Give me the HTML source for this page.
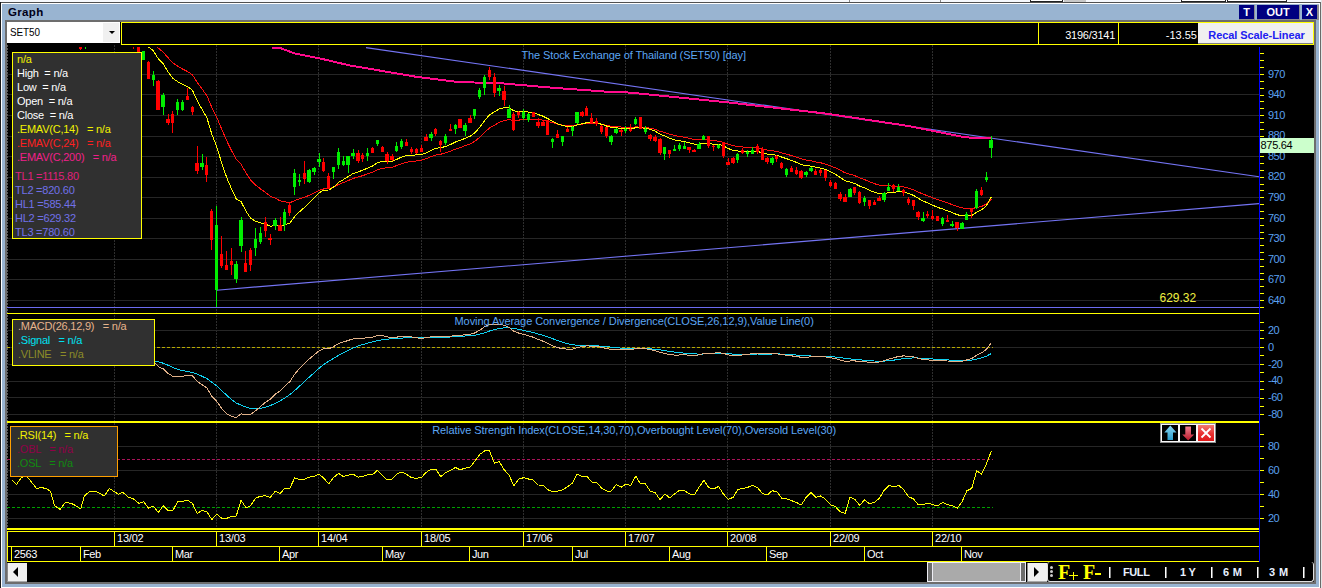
<!DOCTYPE html>
<html><head><meta charset="utf-8"><style>
*{margin:0;padding:0;box-sizing:border-box}
html,body{width:1322px;height:588px;overflow:hidden}
body{position:relative;background:#99b4d1;font-family:"Liberation Sans",sans-serif;font-size:11px}
.a{position:absolute}
.lg{position:absolute;background:#303030;border:1px solid #ffff00;line-height:14px;letter-spacing:-0.23px}
.lg div{height:14px;white-space:pre}
.tb{position:absolute;top:5px;height:15px;background:#000080;color:#fff;font-weight:bold;font-size:11px;text-align:center;line-height:14px;border-right:1px solid #8c8c8c;border-bottom:1px solid #8c8c8c}
.sep{position:absolute;top:567px;width:2px;height:11px;background:#fff;border-right:1px solid #888}
.tt{position:absolute;top:565px;color:#e8f0ff;font-weight:bold;font-size:11px;line-height:14px;letter-spacing:2.5px}
</style></head><body>
<div class="a" style="left:0;top:0;width:1322px;height:2px;background:#f6f8fc"></div>
<div class="a" style="left:849px;top:0;width:1px;height:2px;background:#888"></div>
<div class="a" style="left:940px;top:0;width:1px;height:2px;background:#888"></div>
<div class="a" style="left:1030px;top:0;width:33px;height:2px;border:1px solid #222;border-top:none;background:#fff"></div>
<div class="a" style="left:1064px;top:0;width:22px;height:2px;background:#c8c8c8"></div>
<div class="a" style="left:1181px;top:0;width:45px;height:2px;border:1px solid #222;border-top:none;background:#fff"></div>
<div class="a" style="left:1227px;top:0;width:60px;height:2px;border:1px solid #222;border-top:none;background:#fff"></div>
<div class="a" style="left:0;top:2px;width:1322px;height:1px;background:#505050"></div>
<div class="a" style="left:0;top:3px;width:1322px;height:1px;background:#fff"></div>
<div class="a" style="left:0;top:2px;width:1px;height:586px;background:#1a1a1a"></div><div class="a" style="left:1px;top:587px;width:1320px;height:1px;background:#fff"></div>
<div class="a" style="left:1px;top:3px;width:1px;height:585px;background:#fff"></div>
<div class="a" style="left:1319px;top:3px;width:1px;height:585px;background:#fff"></div>
<div class="a" style="left:1320px;top:2px;width:1px;height:586px;background:#6a6a6a"></div><div class="a" style="left:1321px;top:0;width:1px;height:588px;background:#e4e4e4"></div>
<div class="a" style="left:8px;top:6px;font-weight:bold;font-size:11.5px;color:#000018;line-height:13px;letter-spacing:0.35px">Graph</div>
<div class="tb" style="left:1239px;width:16px">T</div>
<div class="tb" style="left:1257px;width:43px">OUT</div>
<div class="tb" style="left:1302px;width:17px;border-right-width:2px">X</div>
<div class="a" style="left:5px;top:20px;width:1311px;height:564px;background:#6d6d6d"></div>
<svg width="1322" height="588" style="position:absolute;left:0;top:0">
<rect x="7" y="22" width="1307" height="560" fill="#000" />
<g shape-rendering="crispEdges">
<rect x="7" y="74" width="1252" height="1" fill="#262626" />
<rect x="7" y="94" width="1252" height="1" fill="#262626" />
<rect x="7" y="115" width="1252" height="1" fill="#262626" />
<rect x="7" y="136" width="1252" height="1" fill="#262626" />
<rect x="7" y="156" width="1252" height="1" fill="#262626" />
<rect x="7" y="177" width="1252" height="1" fill="#262626" />
<rect x="7" y="197" width="1252" height="1" fill="#262626" />
<rect x="7" y="218" width="1252" height="1" fill="#262626" />
<rect x="7" y="238" width="1252" height="1" fill="#262626" />
<rect x="7" y="259" width="1252" height="1" fill="#262626" />
<rect x="7" y="279" width="1252" height="1" fill="#262626" />
<rect x="7" y="300" width="1252" height="1" fill="#262626" />
<line x1="114.5" y1="45" x2="114.5" y2="528" stroke="#2e2e2e" stroke-width="1" stroke-dasharray="2,1"/>
<line x1="216.5" y1="45" x2="216.5" y2="528" stroke="#2e2e2e" stroke-width="1" stroke-dasharray="2,1"/>
<line x1="318.5" y1="45" x2="318.5" y2="528" stroke="#2e2e2e" stroke-width="1" stroke-dasharray="2,1"/>
<line x1="421.5" y1="45" x2="421.5" y2="528" stroke="#2e2e2e" stroke-width="1" stroke-dasharray="2,1"/>
<line x1="523.5" y1="45" x2="523.5" y2="528" stroke="#2e2e2e" stroke-width="1" stroke-dasharray="2,1"/>
<line x1="625.5" y1="45" x2="625.5" y2="528" stroke="#2e2e2e" stroke-width="1" stroke-dasharray="2,1"/>
<line x1="727.5" y1="45" x2="727.5" y2="528" stroke="#2e2e2e" stroke-width="1" stroke-dasharray="2,1"/>
<line x1="830.5" y1="45" x2="830.5" y2="528" stroke="#2e2e2e" stroke-width="1" stroke-dasharray="2,1"/>
<line x1="932.5" y1="45" x2="932.5" y2="528" stroke="#2e2e2e" stroke-width="1" stroke-dasharray="2,1"/>
<line x1="7.5" y1="45" x2="7.5" y2="528" stroke="#5a5a5a" stroke-width="1" stroke-dasharray="2,1"/>
<rect x="7" y="330" width="1252" height="1" fill="#262626" />
<rect x="7" y="347" width="1252" height="1" fill="#262626" />
<rect x="7" y="364" width="1252" height="1" fill="#262626" />
<rect x="7" y="381" width="1252" height="1" fill="#262626" />
<rect x="7" y="397" width="1252" height="1" fill="#262626" />
<rect x="7" y="414" width="1252" height="1" fill="#262626" />
<rect x="7" y="446" width="1252" height="1" fill="#262626" />
<rect x="7" y="470" width="1252" height="1" fill="#262626" />
<rect x="7" y="494" width="1252" height="1" fill="#262626" />
<rect x="7" y="518" width="1252" height="1" fill="#262626" />
</g>
<line x1="366" y1="47.6" x2="1259" y2="176.8" stroke="#7474f4" stroke-width="1.1"/>
<line x1="216.5" y1="290.2" x2="1259" y2="203.6" stroke="#7474f4" stroke-width="1.1"/>
<g shape-rendering="crispEdges">
<rect x="7" y="307" width="1252" height="1.4" fill="#6c6cf0" />
</g>
<text x="1159.5" y="302" font-size="12" fill="#f0f040" font-family="Liberation Sans">629.32</text>
<clipPath id="pc"><rect x="7" y="47" width="1252" height="265"/></clipPath>
<g clip-path="url(#pc)">
<polyline points="272.0,47.6 280.7,48.2 295.2,53.6 318.8,58.2 349.7,65.4 390.0,72.3 416.2,76.8 459.7,82.2 497.9,83.0 552.3,87.7 606.8,91.7 630.0,92.6 728.0,102.4 826.0,113.6 909.9,126.2 965.8,137.4 991.0,138.2" fill="none" stroke="#ff0a8c" stroke-width="2.0" stroke-linejoin="round" shape-rendering="crispEdges"/>
<polyline points="138.8,35.1 143.7,36.4 148.5,39.9 153.4,42.7 158.3,48.2 163.2,52.0 168.0,57.7 172.9,62.9 177.8,66.1 182.6,69.0 187.5,71.5 192.4,74.8 197.3,82.5 202.1,89.0 207.0,96.0 211.9,107.5 216.7,117.0 221.6,129.0 226.5,140.3 231.4,150.3 236.2,159.4 241.1,164.3 246.0,173.0 250.8,180.4 255.7,185.1 260.6,189.0 265.5,192.4 270.3,196.3 275.2,198.2 280.1,200.9 284.9,201.8 289.8,202.8 294.7,200.5 299.6,198.9 304.4,197.3 309.3,195.2 314.2,193.1 319.0,190.4 323.9,188.9 328.8,188.9 333.7,187.2 338.5,184.5 343.4,182.6 348.3,180.6 353.1,178.4 358.0,177.0 362.9,175.6 367.8,173.8 372.6,172.2 377.5,169.7 382.4,168.3 387.2,167.8 392.1,167.2 397.0,165.5 401.9,163.6 406.7,162.3 411.6,161.5 416.5,160.9 421.3,160.2 426.2,158.7 431.1,156.7 436.0,154.9 440.8,154.2 445.7,152.8 450.6,151.1 455.4,149.1 460.3,147.5 465.2,145.7 470.1,144.0 474.9,141.2 479.8,137.2 484.7,132.4 489.5,128.0 494.4,125.2 499.3,122.3 504.2,120.6 509.0,119.7 513.9,120.5 518.8,120.1 523.6,119.5 528.5,119.1 533.4,119.0 538.3,119.6 543.1,120.1 548.0,121.4 552.9,122.8 557.7,124.1 562.6,125.1 567.5,125.7 572.4,125.8 577.2,124.8 582.1,124.1 587.0,123.5 591.8,123.5 596.7,123.6 601.6,124.3 606.5,125.3 611.3,126.2 616.2,126.5 621.1,127.0 625.9,127.2 630.8,127.6 635.7,126.9 640.6,127.1 645.4,127.3 650.3,128.2 655.2,129.3 660.0,131.3 664.9,132.6 669.8,134.3 674.7,135.5 679.5,136.4 684.4,137.2 689.3,138.3 694.1,139.5 699.0,139.9 703.9,139.6 708.8,140.2 713.6,140.8 718.5,141.1 723.4,142.4 728.2,144.2 733.1,145.7 738.0,146.4 742.9,147.0 747.7,147.4 752.6,147.6 757.5,148.0 762.3,149.0 767.2,150.1 772.1,150.8 777.0,151.5 781.8,152.9 786.7,154.2 791.6,155.6 796.4,157.2 801.3,158.9 806.2,160.0 811.1,160.7 815.9,161.9 820.8,162.8 825.7,164.1 830.5,165.9 835.4,167.8 840.3,170.3 845.2,172.9 850.0,174.2 854.9,175.7 859.8,178.0 864.6,179.6 869.5,181.8 874.4,183.7 879.3,185.1 884.1,185.7 889.0,185.9 893.9,186.2 898.7,186.3 903.6,186.9 908.5,188.2 913.4,189.7 918.2,192.0 923.1,194.1 928.0,195.9 932.8,197.8 937.7,199.7 942.6,201.2 947.5,202.9 952.3,204.7 957.2,206.6 962.1,207.9 966.9,208.5 971.8,208.8 976.7,207.4 981.6,206.4 986.4,204.1 991.3,199.0" fill="none" stroke="#ff1010" stroke-width="1.0" stroke-linejoin="round" shape-rendering="crispEdges"/>
<polyline points="138.8,40.5 143.7,42.0 148.5,47.0 153.4,50.8 158.3,58.8 163.2,63.7 168.0,71.7 172.9,78.5 177.8,81.7 182.6,84.5 187.5,86.6 192.4,90.1 197.3,100.9 202.1,109.3 207.0,118.1 211.9,134.5 216.7,146.6 221.6,162.6 226.5,177.0 231.4,188.7 236.2,198.8 241.1,201.7 246.0,211.2 250.8,218.5 255.7,221.3 260.6,223.0 265.5,224.1 270.3,226.3 275.2,225.5 280.1,226.4 284.9,224.5 289.8,223.1 294.7,216.5 299.6,211.7 304.4,207.4 309.3,202.5 314.2,198.0 319.0,192.9 323.9,190.1 328.8,190.0 333.7,187.0 338.5,182.4 343.4,179.6 348.3,176.6 353.1,173.5 358.0,171.9 362.9,170.2 367.8,168.0 372.6,166.0 377.5,162.7 382.4,161.3 387.2,161.4 392.1,161.2 397.0,159.3 401.9,156.9 406.7,155.5 411.6,155.2 416.5,154.9 421.3,154.6 426.2,152.8 431.1,150.3 436.0,148.2 440.8,147.8 445.7,146.4 450.6,144.5 455.4,142.0 460.3,140.3 465.2,138.3 470.1,136.3 474.9,132.8 479.8,127.1 484.7,120.5 489.5,114.8 494.4,111.9 499.3,108.8 504.2,107.7 509.0,107.9 513.9,110.9 518.8,111.5 523.6,111.6 528.5,112.1 533.4,112.8 538.3,114.6 543.1,116.2 548.0,118.8 552.9,121.5 557.7,123.8 562.6,125.5 567.5,126.5 572.4,126.6 577.2,124.8 582.1,123.7 587.0,122.7 591.8,122.8 596.7,123.0 601.6,124.3 606.5,126.0 611.3,127.4 616.2,127.7 621.1,128.4 625.9,128.6 630.8,129.0 635.7,127.7 640.6,127.9 645.4,128.1 650.3,129.5 655.2,131.1 660.0,134.2 664.9,136.0 669.8,138.4 674.7,139.9 679.5,140.7 684.4,141.5 689.3,142.8 694.1,144.1 699.0,144.2 703.9,143.2 708.8,143.6 713.6,144.2 718.5,144.3 723.4,145.9 728.2,148.5 733.1,150.5 738.0,151.0 742.9,151.4 747.7,151.5 752.6,151.3 757.5,151.5 762.3,152.7 767.2,154.0 772.1,154.6 777.0,155.3 781.8,157.1 786.7,158.7 791.6,160.5 796.4,162.4 801.3,164.6 806.2,165.7 811.1,166.1 815.9,167.3 820.8,168.2 825.7,169.6 830.5,171.8 835.4,174.2 840.3,177.5 845.2,180.9 850.0,182.0 854.9,183.5 859.8,186.2 864.6,187.9 869.5,190.4 874.4,192.3 879.3,193.6 884.1,193.5 889.0,192.7 893.9,192.3 898.7,191.7 903.6,192.0 908.5,193.5 913.4,195.3 918.2,198.3 923.1,201.0 928.0,203.1 932.8,205.3 937.7,207.4 942.6,209.0 947.5,210.8 952.3,212.6 957.2,214.7 962.1,215.9 966.9,215.8 971.8,215.4 976.7,212.2 981.6,209.9 986.4,205.6 991.3,196.9" fill="none" stroke="#ffff00" stroke-width="1.0" stroke-linejoin="round" shape-rendering="crispEdges"/>
<g shape-rendering="crispEdges">
<rect x="80" y="47" width="1" height="3" fill="#ff0000" />
<rect x="79" y="47" width="3" height="2" fill="#ff0000" />
<rect x="85" y="47" width="1" height="1" fill="#00ee00" />
<rect x="85" y="47" width="1" height="2" fill="#00ee00" />
<rect x="133" y="47" width="1" height="1" fill="#ff0000" />
<rect x="133" y="47" width="1" height="2" fill="#ff0000" />
<rect x="138" y="47" width="1" height="5" fill="#ff0000" />
<rect x="137" y="47" width="3" height="5" fill="#ff0000" />
<rect x="143" y="51" width="1" height="9" fill="#00ee00" />
<rect x="142" y="51" width="3" height="9" fill="#00ee00" />
<rect x="148" y="61" width="1" height="18" fill="#ff0000" />
<rect x="147" y="62" width="3" height="17" fill="#ff0000" />
<rect x="153" y="71" width="1" height="15" fill="#00ee00" />
<rect x="152" y="75" width="3" height="5" fill="#00ee00" />
<rect x="158" y="80" width="1" height="30" fill="#ff0000" />
<rect x="156" y="81" width="4" height="29" fill="#ff0000" />
<rect x="163" y="93" width="1" height="22" fill="#00ee00" />
<rect x="161" y="95" width="4" height="12" fill="#00ee00" />
<rect x="168" y="114" width="1" height="11" fill="#ff0000" />
<rect x="166" y="119" width="4" height="4" fill="#ff0000" />
<rect x="172" y="111" width="1" height="22" fill="#ff0000" />
<rect x="171" y="114" width="3" height="9" fill="#ff0000" />
<rect x="177" y="99" width="1" height="16" fill="#00ee00" />
<rect x="176" y="102" width="3" height="8" fill="#00ee00" />
<rect x="182" y="100" width="1" height="11" fill="#00ee00" />
<rect x="181" y="102" width="3" height="8" fill="#00ee00" />
<rect x="187" y="88" width="1" height="12" fill="#ff0000" />
<rect x="186" y="96" width="3" height="4" fill="#ff0000" />
<rect x="192" y="106" width="1" height="9" fill="#ff0000" />
<rect x="191" y="107" width="3" height="5" fill="#ff0000" />
<rect x="197" y="146" width="1" height="28" fill="#ff0000" />
<rect x="195" y="163" width="4" height="8" fill="#ff0000" />
<rect x="202" y="154" width="1" height="16" fill="#00ee00" />
<rect x="200" y="163" width="4" height="4" fill="#00ee00" />
<rect x="206" y="157" width="1" height="25" fill="#ff0000" />
<rect x="205" y="165" width="3" height="10" fill="#ff0000" />
<rect x="211" y="209" width="1" height="41" fill="#ff0000" />
<rect x="210" y="211" width="3" height="29" fill="#ff0000" />
<rect x="216" y="206" width="1" height="101" fill="#00ee00" />
<rect x="215" y="225" width="3" height="65" fill="#00ee00" />
<rect x="221" y="236" width="1" height="32" fill="#ff0000" />
<rect x="220" y="254" width="3" height="12" fill="#ff0000" />
<rect x="226" y="251" width="1" height="19" fill="#ff0000" />
<rect x="225" y="265" width="3" height="5" fill="#ff0000" />
<rect x="231" y="248" width="1" height="27" fill="#ff0000" />
<rect x="230" y="261" width="3" height="4" fill="#ff0000" />
<rect x="236" y="261" width="1" height="22" fill="#00ee00" />
<rect x="234" y="264" width="4" height="15" fill="#00ee00" />
<rect x="241" y="217" width="1" height="35" fill="#00ee00" />
<rect x="239" y="220" width="4" height="26" fill="#00ee00" />
<rect x="245" y="251" width="1" height="21" fill="#ff0000" />
<rect x="244" y="263" width="3" height="9" fill="#ff0000" />
<rect x="250" y="248" width="1" height="23" fill="#ff0000" />
<rect x="249" y="250" width="3" height="15" fill="#ff0000" />
<rect x="255" y="228" width="1" height="28" fill="#00ee00" />
<rect x="254" y="239" width="3" height="9" fill="#00ee00" />
<rect x="260" y="227" width="1" height="17" fill="#00ee00" />
<rect x="259" y="233" width="3" height="9" fill="#00ee00" />
<rect x="265" y="217" width="1" height="20" fill="#ff0000" />
<rect x="264" y="222" width="3" height="9" fill="#ff0000" />
<rect x="270" y="234" width="1" height="11" fill="#ff0000" />
<rect x="268" y="238" width="4" height="2" fill="#ff0000" />
<rect x="275" y="218" width="1" height="12" fill="#00ee00" />
<rect x="273" y="220" width="4" height="6" fill="#00ee00" />
<rect x="280" y="217" width="1" height="14" fill="#ff0000" />
<rect x="278" y="225" width="4" height="6" fill="#ff0000" />
<rect x="284" y="209" width="1" height="22" fill="#00ee00" />
<rect x="283" y="212" width="3" height="13" fill="#00ee00" />
<rect x="289" y="203" width="1" height="13" fill="#ff0000" />
<rect x="288" y="205" width="3" height="8" fill="#ff0000" />
<rect x="294" y="169" width="1" height="26" fill="#00ee00" />
<rect x="293" y="173" width="3" height="14" fill="#00ee00" />
<rect x="299" y="174" width="1" height="12" fill="#00ee00" />
<rect x="298" y="180" width="3" height="2" fill="#00ee00" />
<rect x="304" y="161" width="1" height="23" fill="#ff0000" />
<rect x="303" y="173" width="3" height="6" fill="#ff0000" />
<rect x="309" y="169" width="1" height="14" fill="#00ee00" />
<rect x="307" y="170" width="4" height="12" fill="#00ee00" />
<rect x="314" y="167" width="1" height="8" fill="#00ee00" />
<rect x="312" y="168" width="4" height="4" fill="#00ee00" />
<rect x="319" y="153" width="1" height="14" fill="#00ee00" />
<rect x="317" y="159" width="4" height="3" fill="#00ee00" />
<rect x="323" y="158" width="1" height="14" fill="#ff0000" />
<rect x="322" y="162" width="3" height="9" fill="#ff0000" />
<rect x="328" y="173" width="1" height="16" fill="#ff0000" />
<rect x="327" y="176" width="3" height="13" fill="#ff0000" />
<rect x="333" y="167" width="1" height="12" fill="#00ee00" />
<rect x="332" y="167" width="3" height="5" fill="#00ee00" />
<rect x="338" y="148" width="1" height="21" fill="#00ee00" />
<rect x="337" y="152" width="3" height="13" fill="#00ee00" />
<rect x="343" y="156" width="1" height="10" fill="#00ee00" />
<rect x="342" y="161" width="3" height="4" fill="#00ee00" />
<rect x="348" y="156" width="1" height="17" fill="#00ee00" />
<rect x="346" y="156" width="4" height="9" fill="#00ee00" />
<rect x="353" y="149" width="1" height="10" fill="#00ee00" />
<rect x="351" y="153" width="4" height="3" fill="#00ee00" />
<rect x="358" y="150" width="1" height="13" fill="#ff0000" />
<rect x="356" y="153" width="4" height="8" fill="#ff0000" />
<rect x="362" y="153" width="1" height="9" fill="#ff0000" />
<rect x="361" y="155" width="3" height="4" fill="#ff0000" />
<rect x="367" y="148" width="1" height="13" fill="#00ee00" />
<rect x="366" y="153" width="3" height="3" fill="#00ee00" />
<rect x="372" y="147" width="1" height="6" fill="#ff0000" />
<rect x="371" y="148" width="3" height="5" fill="#ff0000" />
<rect x="377" y="140" width="1" height="6" fill="#00ee00" />
<rect x="376" y="140" width="3" height="4" fill="#00ee00" />
<rect x="382" y="146" width="1" height="6" fill="#ff0000" />
<rect x="381" y="147" width="3" height="5" fill="#ff0000" />
<rect x="387" y="152" width="1" height="12" fill="#ff0000" />
<rect x="385" y="154" width="4" height="7" fill="#ff0000" />
<rect x="392" y="154" width="1" height="7" fill="#ff0000" />
<rect x="390" y="156" width="4" height="4" fill="#ff0000" />
<rect x="396" y="142" width="1" height="10" fill="#00ee00" />
<rect x="395" y="146" width="3" height="5" fill="#00ee00" />
<rect x="401" y="139" width="1" height="10" fill="#00ee00" />
<rect x="400" y="141" width="3" height="6" fill="#00ee00" />
<rect x="406" y="139" width="1" height="7" fill="#ff0000" />
<rect x="405" y="142" width="3" height="4" fill="#ff0000" />
<rect x="411" y="147" width="1" height="7" fill="#ff0000" />
<rect x="410" y="149" width="3" height="3" fill="#ff0000" />
<rect x="416" y="148" width="1" height="6" fill="#ff0000" />
<rect x="415" y="149" width="3" height="4" fill="#ff0000" />
<rect x="421" y="145" width="1" height="7" fill="#ff0000" />
<rect x="420" y="148" width="3" height="4" fill="#ff0000" />
<rect x="426" y="134" width="1" height="7" fill="#ff0000" />
<rect x="424" y="137" width="4" height="4" fill="#ff0000" />
<rect x="431" y="132" width="1" height="9" fill="#00ee00" />
<rect x="429" y="134" width="4" height="4" fill="#00ee00" />
<rect x="435" y="128" width="1" height="8" fill="#ff0000" />
<rect x="434" y="129" width="3" height="5" fill="#ff0000" />
<rect x="440" y="140" width="1" height="12" fill="#ff0000" />
<rect x="439" y="141" width="3" height="4" fill="#ff0000" />
<rect x="445" y="134" width="1" height="11" fill="#00ee00" />
<rect x="444" y="136" width="3" height="7" fill="#00ee00" />
<rect x="450" y="124" width="1" height="7" fill="#ff0000" />
<rect x="449" y="129" width="3" height="2" fill="#ff0000" />
<rect x="455" y="124" width="1" height="10" fill="#00ee00" />
<rect x="454" y="125" width="3" height="4" fill="#00ee00" />
<rect x="460" y="119" width="1" height="9" fill="#ff0000" />
<rect x="458" y="119" width="4" height="9" fill="#ff0000" />
<rect x="465" y="123" width="1" height="13" fill="#00ee00" />
<rect x="463" y="125" width="4" height="6" fill="#00ee00" />
<rect x="470" y="115" width="1" height="8" fill="#ff0000" />
<rect x="468" y="118" width="4" height="5" fill="#ff0000" />
<rect x="474" y="109" width="1" height="10" fill="#00ee00" />
<rect x="473" y="109" width="3" height="7" fill="#00ee00" />
<rect x="479" y="88" width="1" height="11" fill="#00ee00" />
<rect x="478" y="90" width="3" height="7" fill="#00ee00" />
<rect x="484" y="75" width="1" height="20" fill="#00ee00" />
<rect x="483" y="77" width="3" height="11" fill="#00ee00" />
<rect x="489" y="67" width="1" height="13" fill="#ff0000" />
<rect x="488" y="70" width="3" height="7" fill="#ff0000" />
<rect x="494" y="73" width="1" height="24" fill="#ff0000" />
<rect x="493" y="77" width="3" height="16" fill="#ff0000" />
<rect x="499" y="85" width="1" height="11" fill="#00ee00" />
<rect x="497" y="88" width="4" height="3" fill="#00ee00" />
<rect x="504" y="86" width="1" height="20" fill="#ff0000" />
<rect x="502" y="91" width="4" height="9" fill="#ff0000" />
<rect x="509" y="105" width="1" height="13" fill="#00ee00" />
<rect x="507" y="109" width="4" height="9" fill="#00ee00" />
<rect x="513" y="112" width="1" height="19" fill="#ff0000" />
<rect x="512" y="114" width="3" height="16" fill="#ff0000" />
<rect x="518" y="111" width="1" height="7" fill="#ff0000" />
<rect x="517" y="112" width="3" height="3" fill="#ff0000" />
<rect x="523" y="109" width="1" height="11" fill="#00ee00" />
<rect x="522" y="112" width="3" height="6" fill="#00ee00" />
<rect x="528" y="113" width="1" height="9" fill="#00ee00" />
<rect x="527" y="114" width="3" height="6" fill="#00ee00" />
<rect x="533" y="112" width="1" height="5" fill="#ff0000" />
<rect x="532" y="112" width="3" height="5" fill="#ff0000" />
<rect x="538" y="118" width="1" height="10" fill="#ff0000" />
<rect x="536" y="122" width="4" height="4" fill="#ff0000" />
<rect x="543" y="121" width="1" height="5" fill="#ff0000" />
<rect x="541" y="122" width="4" height="4" fill="#ff0000" />
<rect x="547" y="120" width="1" height="15" fill="#ff0000" />
<rect x="546" y="120" width="3" height="15" fill="#ff0000" />
<rect x="552" y="138" width="1" height="10" fill="#00ee00" />
<rect x="551" y="139" width="3" height="3" fill="#00ee00" />
<rect x="557" y="130" width="1" height="8" fill="#ff0000" />
<rect x="556" y="134" width="3" height="4" fill="#ff0000" />
<rect x="562" y="136" width="1" height="10" fill="#00ee00" />
<rect x="561" y="136" width="3" height="6" fill="#00ee00" />
<rect x="567" y="127" width="1" height="5" fill="#ff0000" />
<rect x="566" y="129" width="3" height="3" fill="#ff0000" />
<rect x="572" y="126" width="1" height="10" fill="#00ee00" />
<rect x="571" y="127" width="3" height="4" fill="#00ee00" />
<rect x="577" y="112" width="1" height="12" fill="#00ee00" />
<rect x="575" y="112" width="4" height="11" fill="#00ee00" />
<rect x="582" y="111" width="1" height="6" fill="#ff0000" />
<rect x="580" y="112" width="4" height="4" fill="#ff0000" />
<rect x="586" y="106" width="1" height="10" fill="#ff0000" />
<rect x="585" y="108" width="3" height="8" fill="#ff0000" />
<rect x="591" y="113" width="1" height="10" fill="#ff0000" />
<rect x="590" y="118" width="3" height="5" fill="#ff0000" />
<rect x="596" y="118" width="1" height="8" fill="#ff0000" />
<rect x="595" y="121" width="3" height="3" fill="#ff0000" />
<rect x="601" y="125" width="1" height="9" fill="#ff0000" />
<rect x="600" y="126" width="3" height="6" fill="#ff0000" />
<rect x="606" y="127" width="1" height="11" fill="#ff0000" />
<rect x="605" y="127" width="3" height="9" fill="#ff0000" />
<rect x="611" y="135" width="1" height="10" fill="#00ee00" />
<rect x="609" y="136" width="4" height="6" fill="#00ee00" />
<rect x="616" y="128" width="1" height="6" fill="#00ee00" />
<rect x="614" y="129" width="4" height="4" fill="#00ee00" />
<rect x="621" y="129" width="1" height="7" fill="#ff0000" />
<rect x="619" y="130" width="4" height="2" fill="#ff0000" />
<rect x="625" y="126" width="1" height="7" fill="#00ee00" />
<rect x="624" y="129" width="3" height="2" fill="#00ee00" />
<rect x="630" y="124" width="1" height="8" fill="#ff0000" />
<rect x="629" y="129" width="3" height="2" fill="#ff0000" />
<rect x="635" y="117" width="1" height="8" fill="#00ee00" />
<rect x="634" y="119" width="3" height="5" fill="#00ee00" />
<rect x="640" y="117" width="1" height="12" fill="#ff0000" />
<rect x="639" y="117" width="3" height="12" fill="#ff0000" />
<rect x="645" y="126" width="1" height="8" fill="#00ee00" />
<rect x="644" y="129" width="3" height="3" fill="#00ee00" />
<rect x="650" y="134" width="1" height="7" fill="#ff0000" />
<rect x="648" y="135" width="4" height="4" fill="#ff0000" />
<rect x="655" y="135" width="1" height="7" fill="#ff0000" />
<rect x="653" y="137" width="4" height="4" fill="#ff0000" />
<rect x="660" y="138" width="1" height="17" fill="#ff0000" />
<rect x="658" y="139" width="4" height="14" fill="#ff0000" />
<rect x="664" y="147" width="1" height="13" fill="#00ee00" />
<rect x="663" y="147" width="3" height="7" fill="#00ee00" />
<rect x="669" y="150" width="1" height="8" fill="#ff0000" />
<rect x="668" y="150" width="3" height="4" fill="#ff0000" />
<rect x="674" y="145" width="1" height="6" fill="#00ee00" />
<rect x="673" y="149" width="3" height="2" fill="#00ee00" />
<rect x="679" y="143" width="1" height="8" fill="#00ee00" />
<rect x="678" y="145" width="3" height="4" fill="#00ee00" />
<rect x="684" y="142" width="1" height="7" fill="#00ee00" />
<rect x="683" y="146" width="3" height="3" fill="#00ee00" />
<rect x="689" y="147" width="1" height="6" fill="#ff0000" />
<rect x="687" y="147" width="4" height="3" fill="#ff0000" />
<rect x="694" y="149" width="1" height="3" fill="#ff0000" />
<rect x="692" y="150" width="4" height="2" fill="#ff0000" />
<rect x="699" y="142" width="1" height="7" fill="#00ee00" />
<rect x="697" y="144" width="4" height="5" fill="#00ee00" />
<rect x="703" y="135" width="1" height="5" fill="#00ee00" />
<rect x="702" y="136" width="3" height="4" fill="#00ee00" />
<rect x="708" y="136" width="1" height="12" fill="#ff0000" />
<rect x="707" y="136" width="3" height="10" fill="#ff0000" />
<rect x="713" y="145" width="1" height="6" fill="#ff0000" />
<rect x="712" y="146" width="3" height="1" fill="#ff0000" />
<rect x="718" y="144" width="1" height="5" fill="#00ee00" />
<rect x="717" y="145" width="3" height="3" fill="#00ee00" />
<rect x="723" y="142" width="1" height="16" fill="#ff0000" />
<rect x="722" y="142" width="3" height="14" fill="#ff0000" />
<rect x="728" y="158" width="1" height="7" fill="#ff0000" />
<rect x="726" y="162" width="4" height="3" fill="#ff0000" />
<rect x="733" y="157" width="1" height="7" fill="#ff0000" />
<rect x="731" y="158" width="4" height="5" fill="#ff0000" />
<rect x="737" y="153" width="1" height="10" fill="#00ee00" />
<rect x="736" y="154" width="3" height="6" fill="#00ee00" />
<rect x="742" y="148" width="1" height="6" fill="#ff0000" />
<rect x="741" y="150" width="3" height="3" fill="#ff0000" />
<rect x="747" y="150" width="1" height="7" fill="#00ee00" />
<rect x="746" y="152" width="3" height="2" fill="#00ee00" />
<rect x="752" y="147" width="1" height="7" fill="#00ee00" />
<rect x="751" y="150" width="3" height="4" fill="#00ee00" />
<rect x="757" y="144" width="1" height="10" fill="#ff0000" />
<rect x="756" y="146" width="3" height="6" fill="#ff0000" />
<rect x="762" y="147" width="1" height="13" fill="#ff0000" />
<rect x="761" y="149" width="3" height="11" fill="#ff0000" />
<rect x="767" y="157" width="1" height="7" fill="#ff0000" />
<rect x="765" y="158" width="4" height="4" fill="#ff0000" />
<rect x="772" y="157" width="1" height="8" fill="#00ee00" />
<rect x="770" y="158" width="4" height="5" fill="#00ee00" />
<rect x="776" y="155" width="1" height="7" fill="#ff0000" />
<rect x="775" y="156" width="3" height="3" fill="#ff0000" />
<rect x="781" y="162" width="1" height="7" fill="#ff0000" />
<rect x="780" y="163" width="3" height="5" fill="#ff0000" />
<rect x="786" y="168" width="1" height="9" fill="#00ee00" />
<rect x="785" y="169" width="3" height="6" fill="#00ee00" />
<rect x="791" y="166" width="1" height="6" fill="#ff0000" />
<rect x="790" y="168" width="3" height="4" fill="#ff0000" />
<rect x="796" y="167" width="1" height="8" fill="#ff0000" />
<rect x="795" y="170" width="3" height="4" fill="#ff0000" />
<rect x="801" y="170" width="1" height="9" fill="#ff0000" />
<rect x="799" y="171" width="4" height="7" fill="#ff0000" />
<rect x="806" y="171" width="1" height="6" fill="#00ee00" />
<rect x="804" y="172" width="4" height="3" fill="#00ee00" />
<rect x="811" y="167" width="1" height="5" fill="#00ee00" />
<rect x="809" y="168" width="4" height="3" fill="#00ee00" />
<rect x="815" y="169" width="1" height="6" fill="#ff0000" />
<rect x="814" y="171" width="3" height="4" fill="#ff0000" />
<rect x="820" y="169" width="1" height="7" fill="#ff0000" />
<rect x="819" y="170" width="3" height="3" fill="#ff0000" />
<rect x="825" y="170" width="1" height="11" fill="#ff0000" />
<rect x="824" y="170" width="3" height="8" fill="#ff0000" />
<rect x="830" y="180" width="1" height="7" fill="#ff0000" />
<rect x="829" y="182" width="3" height="4" fill="#ff0000" />
<rect x="835" y="182" width="1" height="7" fill="#ff0000" />
<rect x="834" y="183" width="3" height="6" fill="#ff0000" />
<rect x="840" y="192" width="1" height="9" fill="#ff0000" />
<rect x="838" y="194" width="4" height="5" fill="#ff0000" />
<rect x="845" y="194" width="1" height="8" fill="#ff0000" />
<rect x="843" y="197" width="4" height="5" fill="#ff0000" />
<rect x="850" y="188" width="1" height="9" fill="#00ee00" />
<rect x="848" y="189" width="4" height="8" fill="#00ee00" />
<rect x="854" y="187" width="1" height="8" fill="#ff0000" />
<rect x="853" y="187" width="3" height="6" fill="#ff0000" />
<rect x="859" y="191" width="1" height="13" fill="#ff0000" />
<rect x="858" y="192" width="3" height="11" fill="#ff0000" />
<rect x="864" y="196" width="1" height="10" fill="#00ee00" />
<rect x="863" y="198" width="3" height="4" fill="#00ee00" />
<rect x="869" y="200" width="1" height="9" fill="#ff0000" />
<rect x="868" y="200" width="3" height="6" fill="#ff0000" />
<rect x="874" y="200" width="1" height="5" fill="#ff0000" />
<rect x="873" y="202" width="3" height="3" fill="#ff0000" />
<rect x="879" y="196" width="1" height="5" fill="#ff0000" />
<rect x="877" y="198" width="4" height="3" fill="#ff0000" />
<rect x="884" y="192" width="1" height="10" fill="#00ee00" />
<rect x="882" y="193" width="4" height="7" fill="#00ee00" />
<rect x="888" y="183" width="1" height="8" fill="#00ee00" />
<rect x="887" y="187" width="3" height="4" fill="#00ee00" />
<rect x="893" y="184" width="1" height="8" fill="#ff0000" />
<rect x="892" y="185" width="3" height="4" fill="#ff0000" />
<rect x="898" y="184" width="1" height="7" fill="#00ee00" />
<rect x="897" y="187" width="3" height="4" fill="#00ee00" />
<rect x="903" y="189" width="1" height="7" fill="#ff0000" />
<rect x="902" y="190" width="3" height="3" fill="#ff0000" />
<rect x="908" y="197" width="1" height="8" fill="#ff0000" />
<rect x="907" y="199" width="3" height="4" fill="#ff0000" />
<rect x="913" y="200" width="1" height="10" fill="#ff0000" />
<rect x="912" y="200" width="3" height="6" fill="#ff0000" />
<rect x="918" y="211" width="1" height="9" fill="#ff0000" />
<rect x="916" y="212" width="4" height="5" fill="#ff0000" />
<rect x="923" y="212" width="1" height="10" fill="#00ee00" />
<rect x="921" y="218" width="4" height="3" fill="#00ee00" />
<rect x="927" y="211" width="1" height="7" fill="#ff0000" />
<rect x="926" y="214" width="3" height="2" fill="#ff0000" />
<rect x="932" y="210" width="1" height="10" fill="#ff0000" />
<rect x="931" y="216" width="3" height="3" fill="#ff0000" />
<rect x="937" y="216" width="1" height="5" fill="#ff0000" />
<rect x="936" y="216" width="3" height="5" fill="#ff0000" />
<rect x="942" y="217" width="1" height="9" fill="#00ee00" />
<rect x="941" y="218" width="3" height="6" fill="#00ee00" />
<rect x="947" y="215" width="1" height="7" fill="#ff0000" />
<rect x="946" y="220" width="3" height="2" fill="#ff0000" />
<rect x="952" y="221" width="1" height="6" fill="#00ee00" />
<rect x="950" y="224" width="4" height="2" fill="#00ee00" />
<rect x="957" y="222" width="1" height="9" fill="#ff0000" />
<rect x="955" y="222" width="4" height="6" fill="#ff0000" />
<rect x="962" y="222" width="1" height="7" fill="#00ee00" />
<rect x="960" y="223" width="4" height="6" fill="#00ee00" />
<rect x="966" y="212" width="1" height="8" fill="#00ee00" />
<rect x="965" y="214" width="3" height="6" fill="#00ee00" />
<rect x="971" y="208" width="1" height="10" fill="#ff0000" />
<rect x="970" y="209" width="3" height="3" fill="#ff0000" />
<rect x="976" y="189" width="1" height="20" fill="#00ee00" />
<rect x="975" y="191" width="3" height="17" fill="#00ee00" />
<rect x="981" y="187" width="1" height="9" fill="#ff0000" />
<rect x="980" y="190" width="3" height="5" fill="#ff0000" />
<rect x="986" y="172" width="1" height="10" fill="#00ee00" />
<rect x="985" y="177" width="3" height="3" fill="#00ee00" />
<rect x="991" y="136" width="1" height="22" fill="#00ee00" />
<rect x="989" y="140" width="4" height="8" fill="#00ee00" />
</g>
</g>
<text x="521.5" y="58.5" font-size="11" fill="#5ca6f4" font-family="Liberation Sans" letter-spacing="-0.12">The Stock Exchange of Thailand (SET50) [day]</text>
<g shape-rendering="crispEdges">
<rect x="121" y="44" width="1193" height="1" fill="#ffff00" />
<rect x="7" y="313" width="1252" height="1" fill="#ffff00" />
<rect x="7" y="421" width="1252" height="2" fill="#ffff00" />
<rect x="7" y="528" width="1252" height="2" fill="#ffff00" />
</g>
<g shape-rendering="crispEdges">
<rect x="1259" y="47" width="1" height="515" fill="#0000ff" />
<rect x="1260" y="53" width="4" height="1" fill="#ffff00" />
<rect x="1260" y="60" width="4" height="1" fill="#ffff00" />
<rect x="1260" y="67" width="4" height="1" fill="#ffff00" />
<rect x="1260" y="74" width="4" height="1" fill="#ffff00" />
<rect x="1260" y="81" width="4" height="1" fill="#ffff00" />
<rect x="1260" y="88" width="4" height="1" fill="#ffff00" />
<rect x="1260" y="95" width="4" height="1" fill="#ffff00" />
<rect x="1260" y="101" width="4" height="1" fill="#ffff00" />
<rect x="1260" y="108" width="4" height="1" fill="#ffff00" />
<rect x="1260" y="115" width="4" height="1" fill="#ffff00" />
<rect x="1260" y="122" width="4" height="1" fill="#ffff00" />
<rect x="1260" y="129" width="4" height="1" fill="#ffff00" />
<rect x="1260" y="136" width="4" height="1" fill="#ffff00" />
<rect x="1260" y="142" width="4" height="1" fill="#ffff00" />
<rect x="1260" y="149" width="4" height="1" fill="#ffff00" />
<rect x="1260" y="156" width="4" height="1" fill="#ffff00" />
<rect x="1260" y="163" width="4" height="1" fill="#ffff00" />
<rect x="1260" y="170" width="4" height="1" fill="#ffff00" />
<rect x="1260" y="177" width="4" height="1" fill="#ffff00" />
<rect x="1260" y="184" width="4" height="1" fill="#ffff00" />
<rect x="1260" y="190" width="4" height="1" fill="#ffff00" />
<rect x="1260" y="197" width="4" height="1" fill="#ffff00" />
<rect x="1260" y="204" width="4" height="1" fill="#ffff00" />
<rect x="1260" y="211" width="4" height="1" fill="#ffff00" />
<rect x="1260" y="218" width="4" height="1" fill="#ffff00" />
<rect x="1260" y="225" width="4" height="1" fill="#ffff00" />
<rect x="1260" y="232" width="4" height="1" fill="#ffff00" />
<rect x="1260" y="238" width="4" height="1" fill="#ffff00" />
<rect x="1260" y="245" width="4" height="1" fill="#ffff00" />
<rect x="1260" y="252" width="4" height="1" fill="#ffff00" />
<rect x="1260" y="259" width="4" height="1" fill="#ffff00" />
<rect x="1260" y="266" width="4" height="1" fill="#ffff00" />
<rect x="1260" y="273" width="4" height="1" fill="#ffff00" />
<rect x="1260" y="279" width="4" height="1" fill="#ffff00" />
<rect x="1260" y="286" width="4" height="1" fill="#ffff00" />
<rect x="1260" y="293" width="4" height="1" fill="#ffff00" />
<rect x="1260" y="300" width="4" height="1" fill="#ffff00" />
<rect x="1260" y="307" width="4" height="1" fill="#ffff00" />
<rect x="1260" y="322" width="4" height="1" fill="#ffff00" />
<rect x="1260" y="330" width="4" height="1" fill="#ffff00" />
<rect x="1260" y="338" width="4" height="1" fill="#ffff00" />
<rect x="1260" y="347" width="4" height="1" fill="#ffff00" />
<rect x="1260" y="355" width="4" height="1" fill="#ffff00" />
<rect x="1260" y="364" width="4" height="1" fill="#ffff00" />
<rect x="1260" y="372" width="4" height="1" fill="#ffff00" />
<rect x="1260" y="381" width="4" height="1" fill="#ffff00" />
<rect x="1260" y="389" width="4" height="1" fill="#ffff00" />
<rect x="1260" y="398" width="4" height="1" fill="#ffff00" />
<rect x="1260" y="406" width="4" height="1" fill="#ffff00" />
<rect x="1260" y="414" width="4" height="1" fill="#ffff00" />
<rect x="1260" y="434" width="4" height="1" fill="#ffff00" />
<rect x="1260" y="446" width="4" height="1" fill="#ffff00" />
<rect x="1260" y="458" width="4" height="1" fill="#ffff00" />
<rect x="1260" y="470" width="4" height="1" fill="#ffff00" />
<rect x="1260" y="482" width="4" height="1" fill="#ffff00" />
<rect x="1260" y="494" width="4" height="1" fill="#ffff00" />
<rect x="1260" y="506" width="4" height="1" fill="#ffff00" />
<rect x="1260" y="518" width="4" height="1" fill="#ffff00" />
</g>
<text x="1268" y="77.7" font-size="11" fill="#5aa0f0" font-family="Liberation Sans" letter-spacing="-0.5">970</text>
<text x="1268" y="98.2" font-size="11" fill="#5aa0f0" font-family="Liberation Sans" letter-spacing="-0.5">940</text>
<text x="1268" y="118.8" font-size="11" fill="#5aa0f0" font-family="Liberation Sans" letter-spacing="-0.5">910</text>
<text x="1268" y="139.3" font-size="11" fill="#5aa0f0" font-family="Liberation Sans" letter-spacing="-0.5">880</text>
<text x="1268" y="159.9" font-size="11" fill="#5aa0f0" font-family="Liberation Sans" letter-spacing="-0.5">850</text>
<text x="1268" y="180.4" font-size="11" fill="#5aa0f0" font-family="Liberation Sans" letter-spacing="-0.5">820</text>
<text x="1268" y="201.0" font-size="11" fill="#5aa0f0" font-family="Liberation Sans" letter-spacing="-0.5">790</text>
<text x="1268" y="221.5" font-size="11" fill="#5aa0f0" font-family="Liberation Sans" letter-spacing="-0.5">760</text>
<text x="1268" y="242.1" font-size="11" fill="#5aa0f0" font-family="Liberation Sans" letter-spacing="-0.5">730</text>
<text x="1268" y="262.7" font-size="11" fill="#5aa0f0" font-family="Liberation Sans" letter-spacing="-0.5">700</text>
<text x="1268" y="283.2" font-size="11" fill="#5aa0f0" font-family="Liberation Sans" letter-spacing="-0.5">670</text>
<text x="1268" y="303.8" font-size="11" fill="#5aa0f0" font-family="Liberation Sans" letter-spacing="-0.5">640</text>
<text x="1268" y="333.7" font-size="11" fill="#5aa0f0" font-family="Liberation Sans" letter-spacing="-0.5">20</text>
<text x="1268" y="350.6" font-size="11" fill="#5aa0f0" font-family="Liberation Sans" letter-spacing="-0.5">0</text>
<text x="1268" y="367.5" font-size="11" fill="#5aa0f0" font-family="Liberation Sans" letter-spacing="-0.5">-20</text>
<text x="1268" y="384.3" font-size="11" fill="#5aa0f0" font-family="Liberation Sans" letter-spacing="-0.5">-40</text>
<text x="1268" y="401.2" font-size="11" fill="#5aa0f0" font-family="Liberation Sans" letter-spacing="-0.5">-60</text>
<text x="1268" y="418.1" font-size="11" fill="#5aa0f0" font-family="Liberation Sans" letter-spacing="-0.5">-80</text>
<text x="1268" y="449.7" font-size="11" fill="#5aa0f0" font-family="Liberation Sans" letter-spacing="-0.5">80</text>
<text x="1268" y="473.6" font-size="11" fill="#5aa0f0" font-family="Liberation Sans" letter-spacing="-0.5">60</text>
<text x="1268" y="497.6" font-size="11" fill="#5aa0f0" font-family="Liberation Sans" letter-spacing="-0.5">40</text>
<text x="1268" y="521.5" font-size="11" fill="#5aa0f0" font-family="Liberation Sans" letter-spacing="-0.5">20</text>
<rect x="1260" y="138" width="54" height="15" fill="#ccffcc" />
<text x="1260.5" y="149" font-size="11" fill="#000" font-family="Liberation Sans" letter-spacing="-0.29">875.64</text>
<line x1="7" y1="347.5" x2="993" y2="347.5" stroke="#b8aa00" stroke-width="1" stroke-dasharray="3,2" shape-rendering="crispEdges"/>
<polyline points="138.8,362.2 143.7,360.8 148.5,360.4 153.4,360.6 158.3,361.8 163.2,363.2 168.0,365.2 172.9,367.5 177.8,369.3 182.6,370.6 187.5,371.6 192.4,372.4 197.3,374.2 202.1,376.3 207.0,378.6 211.9,382.2 216.7,386.0 221.6,390.5 226.5,395.1 231.4,399.4 236.2,403.0 241.1,405.2 246.0,407.1 250.8,408.5 255.7,409.0 260.6,408.4 265.5,407.2 270.3,405.6 275.2,403.3 280.1,400.8 284.9,397.9 289.8,394.6 294.7,390.5 299.6,386.1 304.4,381.6 309.3,377.1 314.2,372.7 319.0,368.3 323.9,364.4 328.8,361.2 333.7,358.3 338.5,355.4 343.4,352.7 348.3,350.2 353.1,348.0 358.0,346.1 362.9,344.5 367.8,343.1 372.6,341.9 377.5,340.7 382.4,339.7 387.2,339.1 392.1,338.8 397.0,338.5 401.9,338.1 406.7,337.7 411.6,337.6 416.5,337.6 421.3,337.8 426.2,337.8 431.1,337.6 436.0,337.3 440.8,337.2 445.7,337.1 450.6,337.0 455.4,336.6 460.3,336.4 465.2,336.0 470.1,335.7 474.9,335.2 479.8,334.1 484.7,332.7 489.5,331.0 494.4,329.6 499.3,328.5 504.2,327.9 509.0,327.8 513.9,328.5 518.8,329.4 523.6,330.4 528.5,331.5 533.4,332.6 538.3,334.0 543.1,335.4 548.0,337.1 552.9,338.8 557.7,340.6 562.6,342.2 567.5,343.6 572.4,344.7 577.2,345.3 582.1,345.5 587.0,345.6 591.8,345.7 596.7,345.9 601.6,346.2 606.5,346.6 611.3,347.2 616.2,347.7 621.1,348.1 625.9,348.4 630.8,348.7 635.7,348.7 640.6,348.7 645.4,348.7 650.3,348.9 655.2,349.2 660.0,349.9 664.9,350.6 669.8,351.4 674.7,352.1 679.5,352.7 684.4,353.1 689.3,353.5 694.1,353.9 699.0,354.1 703.9,354.0 708.8,353.8 713.6,353.7 718.5,353.5 723.4,353.5 728.2,353.7 733.1,354.1 738.0,354.4 742.9,354.5 747.7,354.4 752.6,354.3 757.5,354.0 762.3,354.0 767.2,354.0 772.1,354.0 777.0,353.9 781.8,354.1 786.7,354.3 791.6,354.6 796.4,355.0 801.3,355.5 806.2,355.8 811.1,356.0 815.9,356.2 820.8,356.3 825.7,356.4 830.5,356.6 835.4,357.0 840.3,357.6 845.2,358.4 850.0,358.9 854.9,359.3 859.8,359.8 864.6,360.2 869.5,360.6 874.4,361.0 879.3,361.2 884.1,361.1 889.0,360.7 893.9,360.1 898.7,359.4 903.6,358.7 908.5,358.2 913.4,357.9 918.2,358.0 923.1,358.3 928.0,358.6 932.8,359.0 937.7,359.3 942.6,359.6 947.5,359.9 952.3,360.2 957.2,360.5 962.1,360.6 966.9,360.5 971.8,360.1 976.7,359.1 981.6,357.9 986.4,356.2 991.3,353.5" fill="none" stroke="#10d0f0" stroke-width="1.0" stroke-linejoin="round" shape-rendering="crispEdges"/>
<polyline points="138.8,353.7 143.7,355.1 148.5,358.9 153.4,361.3 158.3,366.5 163.2,368.9 168.0,373.3 172.9,376.4 177.8,376.5 182.6,376.2 187.5,375.4 192.4,375.7 197.3,381.4 202.1,384.7 207.0,388.0 211.9,396.6 216.7,401.3 221.6,408.3 226.5,413.5 231.4,416.4 236.2,417.7 241.1,413.7 246.0,414.9 250.8,414.3 255.7,410.6 260.6,406.4 265.5,402.2 270.3,399.2 275.2,394.2 280.1,390.9 284.9,386.0 289.8,381.7 294.7,374.1 299.6,368.5 304.4,363.8 309.3,359.0 314.2,354.9 319.0,350.8 323.9,348.7 328.8,348.7 333.7,346.6 338.5,343.5 343.4,342.0 348.3,340.4 353.1,338.9 358.0,338.6 362.9,338.3 367.8,337.5 372.6,337.1 377.5,335.6 382.4,335.7 387.2,336.8 392.1,337.7 397.0,337.1 401.9,336.3 406.7,336.3 411.6,337.0 416.5,337.8 421.3,338.4 426.2,337.8 431.1,336.8 436.0,336.2 440.8,336.9 445.7,336.8 450.6,336.3 455.4,335.4 460.3,335.2 465.2,334.8 470.1,334.4 474.9,332.9 479.8,330.1 484.7,326.7 489.5,324.3 494.4,324.3 499.3,324.0 504.2,325.3 509.0,327.4 513.9,331.3 518.8,333.1 523.6,334.4 528.5,335.8 533.4,337.3 538.3,339.4 543.1,341.2 548.0,343.6 552.9,345.9 557.7,347.6 562.6,348.7 567.5,349.2 572.4,349.1 577.2,347.5 582.1,346.6 587.0,345.9 591.8,346.2 596.7,346.4 601.6,347.4 606.5,348.6 611.3,349.5 616.2,349.5 621.1,349.8 625.9,349.7 630.8,349.7 635.7,348.6 640.6,348.6 645.4,348.6 650.3,349.6 655.2,350.6 660.0,352.5 664.9,353.4 669.8,354.7 674.7,355.1 679.5,355.0 684.4,354.9 689.3,355.1 694.1,355.5 699.0,354.8 703.9,353.4 708.8,353.2 713.6,353.1 718.5,352.7 723.4,353.4 728.2,354.8 733.1,355.7 738.0,355.3 742.9,354.9 747.7,354.3 752.6,353.6 757.5,353.2 762.3,353.6 767.2,354.0 772.1,353.9 777.0,353.9 781.8,354.6 786.7,355.2 791.6,355.9 796.4,356.5 801.3,357.3 806.2,357.3 811.1,356.7 815.9,356.8 820.8,356.6 825.7,356.9 830.5,357.7 835.4,358.5 840.3,360.0 845.2,361.4 850.0,361.0 854.9,360.9 859.8,361.7 864.6,361.7 869.5,362.3 874.4,362.5 879.3,362.0 884.1,360.7 889.0,359.0 893.9,357.7 898.7,356.4 903.6,355.9 908.5,356.3 913.4,356.9 918.2,358.3 923.1,359.4 928.0,359.9 932.8,360.4 937.7,360.9 942.6,360.9 947.5,361.0 952.3,361.2 957.2,361.6 962.1,361.2 966.9,359.9 971.8,358.5 976.7,355.2 981.6,352.9 986.4,349.3 991.3,342.8" fill="none" stroke="#e0b088" stroke-width="1.0" stroke-linejoin="round" shape-rendering="crispEdges"/>
<text x="454.5" y="325" font-size="11" fill="#5ca6f4" font-family="Liberation Sans" letter-spacing="-0.07">Moving Average Convergence / Divergence(CLOSE,26,12,9),Value Line(0)</text>
<line x1="7" y1="459" x2="993" y2="459" stroke="#aa145a" stroke-width="1" stroke-dasharray="3,2" shape-rendering="crispEdges"/>
<line x1="7" y1="507" x2="993" y2="507" stroke="#00a000" stroke-width="1" stroke-dasharray="3,2" shape-rendering="crispEdges"/>
<polyline points="12.3,480.3 16.5,484.5 21.3,477.5 26.2,475.4 31.0,481.5 36.5,488.4 40.7,487.6 46.2,488.4 50.4,491.2 54.6,505.7 60.1,509.3 65.5,502.4 71.0,503.3 75.8,505.7 80.7,509.0 84.3,496.0 89.7,491.5 97.0,491.8 104.3,496.0 109.4,488.4 118.2,494.2 123.0,492.4 128.5,497.2 133.3,498.8 138.8,503.3 143.7,501.7 148.5,508.1 153.4,506.2 158.3,512.7 163.2,505.6 168.0,510.6 172.9,510.5 177.8,501.3 182.6,501.3 187.5,500.3 192.4,503.3 197.3,513.7 202.1,510.2 207.0,512.0 211.9,519.6 216.7,514.0 221.6,518.1 226.5,518.4 231.4,516.5 236.2,516.1 241.1,500.3 246.0,507.8 250.8,505.5 255.7,498.0 260.6,496.3 265.5,495.7 270.3,497.4 275.2,491.3 280.1,493.7 284.9,488.1 289.8,488.3 294.7,477.8 299.6,479.6 304.4,479.4 309.3,477.1 314.2,476.5 319.0,474.0 323.9,478.3 328.8,483.9 333.7,477.4 338.5,473.4 343.4,476.5 348.3,475.2 353.1,474.2 358.0,477.2 362.9,476.5 367.8,474.6 372.6,474.6 377.5,470.2 382.4,475.7 387.2,479.8 392.1,479.2 397.0,473.8 401.9,472.0 406.7,474.4 411.6,477.8 416.5,478.2 421.3,477.6 426.2,472.3 431.1,469.3 436.0,469.5 440.8,476.6 445.7,472.6 450.6,470.2 455.4,467.5 460.3,469.8 465.2,468.1 470.1,467.2 474.9,461.0 479.8,454.4 484.7,450.9 489.5,450.9 494.4,463.3 499.3,461.6 504.2,469.7 509.0,475.0 513.9,485.8 518.8,479.0 523.6,477.7 528.5,479.0 533.4,480.2 538.3,485.0 543.1,485.3 548.0,489.8 552.9,491.8 557.7,491.1 562.6,489.9 567.5,486.7 572.4,483.0 577.2,474.1 582.1,476.6 587.0,476.5 591.8,482.1 596.7,482.4 601.6,488.1 606.5,491.0 611.3,491.0 616.2,484.8 621.1,487.2 625.9,484.1 630.8,485.7 635.7,476.1 640.6,483.9 645.4,483.9 650.3,491.1 655.2,492.6 660.0,499.8 664.9,494.1 669.8,497.9 674.7,493.8 679.5,490.2 684.4,490.8 689.3,493.8 694.1,495.1 699.0,487.3 703.9,480.4 708.8,487.6 713.6,488.9 718.5,486.5 723.4,494.0 728.2,499.2 733.1,497.4 738.0,489.3 742.9,488.5 747.7,487.3 752.6,485.6 757.5,487.5 762.3,493.5 767.2,495.1 772.1,490.7 777.0,491.8 781.8,498.3 786.7,498.8 791.6,500.7 796.4,502.5 801.3,505.0 806.2,497.3 811.1,492.6 815.9,497.5 820.8,495.9 825.7,499.4 830.5,504.8 835.4,506.6 840.3,511.8 845.2,513.3 850.0,497.0 854.9,499.5 859.8,505.3 864.6,499.8 869.5,503.9 874.4,502.4 879.3,498.4 884.1,490.4 889.0,485.3 893.9,487.1 898.7,485.2 903.6,489.7 908.5,496.7 913.4,498.8 918.2,504.6 923.1,504.7 928.0,503.0 932.8,504.7 937.7,505.8 942.6,502.4 947.5,504.7 952.3,505.8 957.2,508.3 962.1,501.6 966.9,490.8 971.8,488.3 976.7,470.6 981.6,474.2 986.4,464.0 991.3,451.2" fill="none" stroke="#ffff00" stroke-width="1.0" stroke-linejoin="round" shape-rendering="crispEdges"/>
<text x="432.2" y="434.3" font-size="11" fill="#5ca6f4" font-family="Liberation Sans" letter-spacing="-0.08">Relative Strength Index(CLOSE,14,30,70),Overbought Level(70),Oversold Level(30)</text>
<g shape-rendering="crispEdges">
<rect x="7" y="531" width="1252" height="1" fill="#ffff00" />
<rect x="7" y="546" width="1252" height="1" fill="#ffff00" />
<rect x="7" y="561" width="1252" height="1" fill="#ffff00" />
<rect x="7" y="531" width="1" height="31" fill="#ffff00" />
<rect x="114" y="531" width="1" height="15" fill="#ffff00" />
<rect x="216" y="531" width="1" height="15" fill="#ffff00" />
<rect x="318" y="531" width="1" height="15" fill="#ffff00" />
<rect x="421" y="531" width="1" height="15" fill="#ffff00" />
<rect x="523" y="531" width="1" height="15" fill="#ffff00" />
<rect x="625" y="531" width="1" height="15" fill="#ffff00" />
<rect x="727" y="531" width="1" height="15" fill="#ffff00" />
<rect x="830" y="531" width="1" height="15" fill="#ffff00" />
<rect x="932" y="531" width="1" height="15" fill="#ffff00" />
<rect x="11" y="546" width="1" height="15" fill="#ffff00" />
<rect x="80" y="546" width="1" height="15" fill="#ffff00" />
<rect x="172" y="546" width="1" height="15" fill="#ffff00" />
<rect x="279" y="546" width="1" height="15" fill="#ffff00" />
<rect x="382" y="546" width="1" height="15" fill="#ffff00" />
<rect x="469" y="546" width="1" height="15" fill="#ffff00" />
<rect x="572" y="546" width="1" height="15" fill="#ffff00" />
<rect x="669" y="546" width="1" height="15" fill="#ffff00" />
<rect x="766" y="546" width="1" height="15" fill="#ffff00" />
<rect x="864" y="546" width="1" height="15" fill="#ffff00" />
<rect x="961" y="546" width="1" height="15" fill="#ffff00" />
</g>
<text x="117" y="541.6" font-size="11" fill="#fff" font-family="Liberation Sans" letter-spacing="-0.2">13/02</text>
<text x="219" y="541.6" font-size="11" fill="#fff" font-family="Liberation Sans" letter-spacing="-0.2">13/03</text>
<text x="321" y="541.6" font-size="11" fill="#fff" font-family="Liberation Sans" letter-spacing="-0.2">14/04</text>
<text x="424" y="541.6" font-size="11" fill="#fff" font-family="Liberation Sans" letter-spacing="-0.2">18/05</text>
<text x="526" y="541.6" font-size="11" fill="#fff" font-family="Liberation Sans" letter-spacing="-0.2">17/06</text>
<text x="628" y="541.6" font-size="11" fill="#fff" font-family="Liberation Sans" letter-spacing="-0.2">17/07</text>
<text x="730" y="541.6" font-size="11" fill="#fff" font-family="Liberation Sans" letter-spacing="-0.2">20/08</text>
<text x="833" y="541.6" font-size="11" fill="#fff" font-family="Liberation Sans" letter-spacing="-0.2">22/09</text>
<text x="935" y="541.6" font-size="11" fill="#fff" font-family="Liberation Sans" letter-spacing="-0.2">22/10</text>
<text x="14" y="557.5" font-size="11" fill="#fff" font-family="Liberation Sans" letter-spacing="-0.4">2563</text>
<text x="83" y="557.5" font-size="11" fill="#fff" font-family="Liberation Sans" letter-spacing="-0.4">Feb</text>
<text x="175" y="557.5" font-size="11" fill="#fff" font-family="Liberation Sans" letter-spacing="-0.4">Mar</text>
<text x="282" y="557.5" font-size="11" fill="#fff" font-family="Liberation Sans" letter-spacing="-0.4">Apr</text>
<text x="385" y="557.5" font-size="11" fill="#fff" font-family="Liberation Sans" letter-spacing="-0.4">May</text>
<text x="472" y="557.5" font-size="11" fill="#fff" font-family="Liberation Sans" letter-spacing="-0.4">Jun</text>
<text x="575" y="557.5" font-size="11" fill="#fff" font-family="Liberation Sans" letter-spacing="-0.4">Jul</text>
<text x="672" y="557.5" font-size="11" fill="#fff" font-family="Liberation Sans" letter-spacing="-0.4">Aug</text>
<text x="769" y="557.5" font-size="11" fill="#fff" font-family="Liberation Sans" letter-spacing="-0.4">Sep</text>
<text x="867" y="557.5" font-size="11" fill="#fff" font-family="Liberation Sans" letter-spacing="-0.4">Oct</text>
<text x="964" y="557.5" font-size="11" fill="#fff" font-family="Liberation Sans" letter-spacing="-0.4">Nov</text>
</svg>
<div class="a" style="left:7px;top:22px;width:113px;height:21px;background:#fff"></div>
<div class="a" style="left:103px;top:23px;width:16px;height:19px;background:#f0f0f0"></div>
<div class="a" style="left:109px;top:31px;width:0;height:0;border-left:3px solid transparent;border-right:3px solid transparent;border-top:3px solid #000"></div>
<div class="a" style="left:10px;top:25px;color:#000;line-height:14px;letter-spacing:-0.1px;transform:scaleX(0.9);transform-origin:0 0">SET50</div>
<div class="a" style="left:121px;top:22px;width:1193px;height:23px;border:1px solid #ffff00;background:#000"></div>
<div class="a" style="left:1038px;top:22px;width:1px;height:23px;background:#ffff00"></div>
<div class="a" style="left:1118px;top:22px;width:1px;height:23px;background:#ffff00"></div>
<div class="a" style="left:1039px;top:28px;width:76px;text-align:right;color:#fff;line-height:14px;letter-spacing:-0.25px">3196/3141</div>
<div class="a" style="left:1120px;top:28px;width:77px;text-align:right;color:#fff;line-height:14px">-13.55</div>
<div class="a" style="left:1198px;top:23px;width:115px;height:21px;background:#f0f0f0;border-bottom:1px solid #808080"></div>
<div class="a" style="left:1199px;top:28px;width:115px;text-align:center;color:#2020f0;font-weight:bold;line-height:14px;letter-spacing:-0.08px">Recal Scale-Linear</div>

<div class="lg" style="left:12px;top:52px;width:130px;height:187px;padding:0 0 0 4px;color:#fff">
<div style="color:#f0f000;margin-top:-1px">n/a</div><div>High  = n/a</div><div>Low  = n/a</div><div>Open  = n/a</div><div>Close  = n/a</div><div style="color:#f0f000">.EMAV(C,14)   = n/a</div><div style="color:#ff2020">.EMAV(C,24)   = n/a</div><div style="color:#f0208a">.EMAV(C,200)   = n/a</div><div style="height:5px"></div><div style="color:#e0207c;margin-left:-2px">TL1 =1115.80</div><div style="color:#7070e8;margin-left:-2px">TL2 =820.60</div><div style="color:#7070e8;margin-left:-2px">HL1 =585.44</div><div style="color:#7070e8;margin-left:-2px">HL2 =629.32</div><div style="color:#7070e8;margin-left:-2px">TL3 =780.60</div>
</div>
<div class="lg" style="left:12px;top:319px;width:143px;height:47px;padding:0 0 0 5px">
<div style="color:#e6b48c;margin-top:-1px">.MACD(26,12,9)   = n/a</div><div style="color:#00e0f0">.Signal   = n/a</div><div style="color:#8c8c28">.VLINE   = n/a</div>
</div>
<div class="lg" style="left:10px;top:426px;width:108px;height:51px;padding:0 0 0 6px;border-color:#ffa000">
<div style="color:#f0f000;margin-top:1px">.RSI(14)   = n/a</div><div style="color:#900048">.OBL   = n/a</div><div style="color:#108a10">.OSL   = n/a</div>
</div>

<!-- scrollbar -->
<div class="a" style="left:7px;top:563px;width:20px;height:19px;background:#f0f0f0;border-left:1px solid #8a8a8a;border-bottom:1px solid #a8a8a8"></div>
<div class="a" style="left:13px;top:567px;width:0;height:0;border-top:5px solid transparent;border-bottom:5px solid transparent;border-right:5px solid #000"></div>
<div class="a" style="left:927px;top:562px;width:99px;height:20px;background:#eeeef4"></div>
<div class="a" style="left:928px;top:563px;width:4px;height:18px;background:#6d6d6d"></div>
<div class="a" style="left:1021px;top:563px;width:4px;height:18px;background:#6d6d6d"></div>
<div class="a" style="left:933px;top:563px;width:87px;height:18px;background:#aaa"></div>
<div class="a" style="left:1027px;top:563px;width:20px;height:19px;background:#f0f0f0;border-left:1px solid #8a8a8a;border-bottom:1px solid #a8a8a8"></div>
<div class="a" style="left:1034px;top:567px;width:0;height:0;border-top:5px solid transparent;border-bottom:5px solid transparent;border-left:5px solid #000"></div>
<div class="a" style="left:1047px;top:562px;width:267px;height:20px;background:#000;border:1px solid #e0e0e0;border-radius:3px;border-top:none"></div>
<div class="a" style="left:1050px;top:566px;width:3px;height:3px;border-radius:2px;background:#ccc"></div>
<div class="a" style="left:1050px;top:570px;width:3px;height:3px;border-radius:2px;background:#ccc"></div>
<div class="a" style="left:1050px;top:574px;width:3px;height:3px;border-radius:2px;background:#ccc"></div>
<div class="a" style="left:1058px;top:561px;color:#ffff00;font-family:'Liberation Serif',serif;font-weight:bold;font-size:20px;line-height:22px">F</div>
<div class="a" style="left:1083px;top:561px;color:#ffff00;font-family:'Liberation Serif',serif;font-weight:bold;font-size:20px;line-height:22px">F</div>
<div class="a" style="left:1069px;top:575px;width:9px;height:1px;background:#ffff00"></div>
<div class="a" style="left:1073px;top:572px;width:1px;height:8px;background:#ffff00"></div>
<div class="a" style="left:1095px;top:573px;width:6px;height:2px;background:#ffff00"></div>
<div class="sep" style="left:1109px"></div>
<div class="tt" style="left:1123px;letter-spacing:-0.4px">FULL</div>
<div class="sep" style="left:1165px"></div>
<div class="tt" style="left:1180px">1Y</div>
<div class="sep" style="left:1211px"></div>
<div class="tt" style="left:1223px;letter-spacing:3.6px">6M</div>
<div class="sep" style="left:1257px"></div>
<div class="tt" style="left:1269px;letter-spacing:3.8px">3M</div>
<div class="sep" style="left:1303px"></div>

<!-- RSI buttons -->
<div class="a" style="left:1160px;top:423px;width:56px;height:20px;background:#f8f8f8;border:1px solid #909090"></div>
<div class="a" style="left:1162px;top:425px;width:16px;height:16px;background:#000"></div>
<div class="a" style="left:1180px;top:425px;width:16px;height:16px;background:#000"></div>
<div class="a" style="left:1198px;top:425px;width:16px;height:16px;background:linear-gradient(#f07a70,#e83030 55%,#e01818)"></div>
<svg class="a" style="left:0;top:0" width="1322" height="588">
<defs><linearGradient id="gu" x1="0" y1="0" x2="0" y2="1"><stop offset="0" stop-color="#8ad8f4"/><stop offset="1" stop-color="#2a9ccc"/></linearGradient><linearGradient id="gd" x1="0" y1="0" x2="0" y2="1"><stop offset="0" stop-color="#f08090"/><stop offset="1" stop-color="#b81828"/></linearGradient></defs><path d="M1170.3 425.5 L1176.5 432.6 L1173 432.6 L1173 440 L1167.5 440 L1167.5 432.6 L1164.3 432.6 Z" fill="url(#gu)"/>
<path d="M1188.2 440.5 L1194.2 434.5 L1191 434.5 L1191 426.5 L1185.3 426.5 L1185.3 434.5 L1182.2 434.5 Z" fill="url(#gd)"/>
<path d="M1201.5 428.5 L1210.5 437.5 M1210.5 428.5 L1201.5 437.5" stroke="#fff" stroke-width="1.8"/>
</svg>
</body></html>
